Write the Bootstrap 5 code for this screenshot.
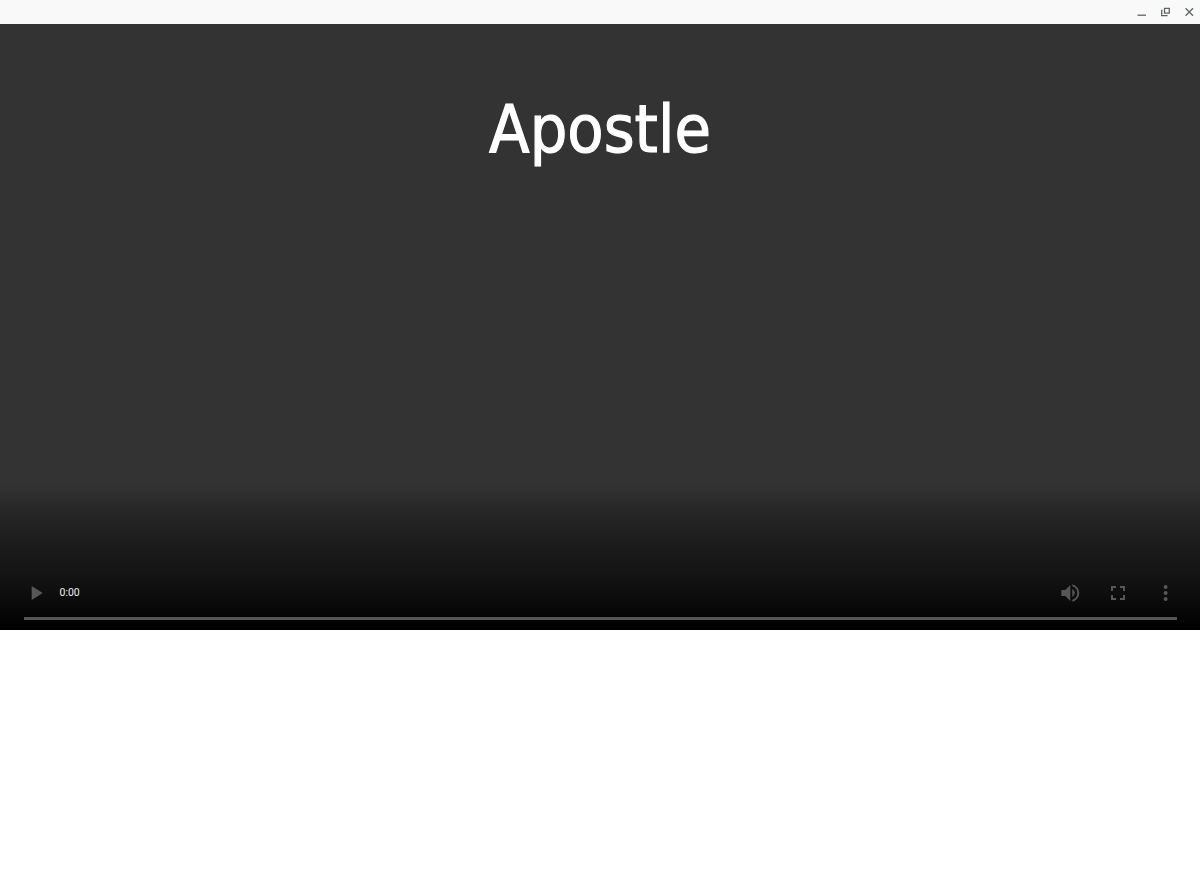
<!DOCTYPE html>
<html lang="en">
<head>
<meta charset="utf-8">
<meta name="viewport" content="width=device-width, initial-scale=1">
<title>Apostle</title>
<link href="https://cdn.jsdelivr.net/npm/bootstrap@5.3.0/dist/css/bootstrap.min.css" rel="stylesheet">
<style>
body { background: #fff; overflow: hidden; }
svg { display: block; }
.window-bar { height: 24px; background: #f9f9f9; color: #5f6368; padding-right: 5px; gap: 12px; }
.player { height: 606px; background: linear-gradient(#333 0, #333 460px, #272727 486px, #1b1b1b 522px, #141414 550px, #0a0a0a 580px, #000 604px); }
.film-title { font: 66px/1 "DejaVu Sans Condensed", "DejaVu Sans", sans-serif; font-stretch: condensed; color: #fff; margin-top: 73px; -webkit-text-stroke: 1.1px #fff; }
.controls { height: 24px; margin: 0 22.5px 0 24px; color: #575757; fill: currentColor; }
.control-set { gap: 23.5px; }
.clock { font: 10.5px/12px Roboto, sans-serif; color: #eee; margin: 0 0 0 11.5px; }
.timeline { height: 2.5px; margin: 12px 23px 10.5px 24px; background: #565656; }
.icon-btn { background: none; border: 0; padding: 0; color: inherit; }
</style>
</head>
<body>
<header class="window-bar d-flex align-items-center justify-content-end">
  <button class="icon-btn" aria-label="Minimize"><svg width="12" height="12" viewBox="0 0 12 12"><path d="M2.5 9.2h8.5" stroke="currentColor" stroke-width="1.3"/></svg></button>
  <button class="icon-btn" aria-label="Restore"><svg width="12" height="12" viewBox="0 0 12 12" fill="none" stroke="currentColor" stroke-width="1.3"><path d="M5.5 2.3h4.8v4.8H5.5zM3.5 4.5h-.8v5.2H8V9"/></svg></button>
  <button class="icon-btn" aria-label="Close"><svg width="12" height="12" viewBox="0 0 12 12"><path d="m2.6 2.3 7.4 7.4m0-7.4L2.6 9.7" stroke="currentColor" stroke-width="1.3"/></svg></button>
</header>
<main class="player d-flex flex-column">
  <h1 class="film-title text-center mb-0">Apostle</h1>
  <div class="controls d-flex align-items-center justify-content-between mt-auto">
    <div class="d-flex align-items-center">
      <button class="icon-btn" aria-label="Play"><svg width="24" height="24" viewBox="0 0 24 24"><path d="M7.7 5v14l11-7z"/></svg></button>
      <span class="clock">0:00</span>
    </div>
    <div class="control-set d-flex align-items-center">
      <button class="icon-btn" aria-label="Volume"><svg width="24" height="24" viewBox="0.7 0 24 24"><path d="M3 9v6h4l5 5V4L7 9H3zm13.5 3A4.5 4.5 0 0 0 14 7.97v8.05A4.5 4.5 0 0 0 16.5 12zM14 3.23v2.06a7 7 0 0 1 0 13.42v2.06a9 9 0 0 0 0-17.54z"/></svg></button>
      <button class="icon-btn" aria-label="Full screen"><svg width="24" height="24" viewBox="0 0 24 24"><path d="M7 14H5v5h5v-2H7v-3zM5 10h2V7h3V5H5v5zm12 7h-3v2h5v-5h-2v3zM14 5v2h3v3h2V5h-5z"/></svg></button>
      <button class="icon-btn" aria-label="More options"><svg width="24" height="24" viewBox="0.4 0 24 24"><circle cx="12" cy="6" r="2"/><circle cx="12" cy="12" r="2"/><circle cx="12" cy="18" r="2"/></svg></button>
    </div>
  </div>
  <div class="timeline"></div>
</main>
<script src="https://cdn.jsdelivr.net/npm/bootstrap@5.3.0/dist/js/bootstrap.bundle.min.js"></script>
</body>
</html>
